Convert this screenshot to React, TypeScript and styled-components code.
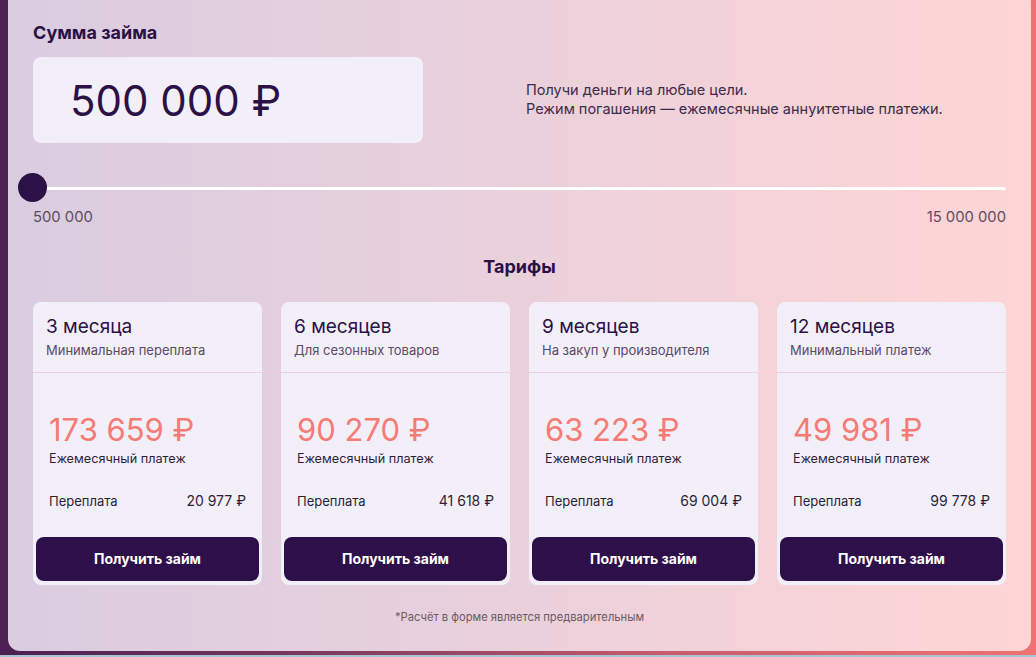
import React from "react";
import styled, { createGlobalStyle } from "styled-components";

const GlobalStyle = createGlobalStyle`
  html, body { margin: 0; padding: 0; overflow: hidden; }
  body { font-family: "Inter", "Noto Sans", sans-serif; background: #9fbccb; }
`;

const Page = styled.div`
  width: 1036px;
  height: 657px;
  display: flex;
  flex-direction: column;
`;

const Backdrop = styled.div`
  height: 655px;
  box-sizing: border-box;
  padding: 0 5px 4px 8px;
  background: linear-gradient(90deg, #4a2051 0%, #7a3a5e 30%, #c85c6e 65%, #f07272 100%);
  display: flex;
  flex-direction: column;
`;

const BottomStrip = styled.div`
  height: 2px;
  background: #a9c4d2;
`;

const Panel = styled.div`
  margin-top: -10px;
  flex: 1;
  border-radius: 12px;
  background: linear-gradient(90deg, #dacce0 0%, #e8d0dc 45%, #ffd5d5 100%);
  box-sizing: border-box;
  padding: 31px 25px 0 25px;
  display: flex;
  flex-direction: column;
`;

const Heading = styled.h2`
  margin: 0;
  font-family: "Inter", sans-serif;
  font-weight: 700;
  font-size: 18px;
  line-height: 24px;
  color: #2b1145;
`;

const AmountRow = styled.div`
  margin-top: 12px;
  display: flex;
  align-items: center;
`;

const AmountBox = styled.div`
  width: 390px;
  height: 86px;
  box-sizing: border-box;
  padding-left: 37px;
  border-radius: 8px;
  background: #f3eff9;
  display: flex;
  align-items: center;
  font-size: 42px;
  font-weight: 400;
  color: #2b1145;
`;

const Note = styled.p`
  margin: 0 0 3px 103px;
  font-size: 14.5px;
  line-height: 19px;
  color: #3b2c4c;
`;

const SliderTrack = styled.div`
  position: relative;
  margin-top: 30px;
  height: 30px;
  display: flex;
  align-items: center;
`;

const TrackLine = styled.div`
  flex: 1;
  height: 3px;
  border-radius: 2px;
  background: #ffffff;
`;

const Thumb = styled.div`
  position: absolute;
  left: -15px;
  top: 0;
  width: 29px;
  height: 29px;
  border-radius: 50%;
  background: #2b1145;
`;

const RangeLabels = styled.div`
  margin-top: 6px;
  display: flex;
  justify-content: space-between;
  font-family: "Inter", sans-serif;
  font-size: 14.8px;
  line-height: 16px;
  color: #5d4c5e;
`;

const SectionTitle = styled.h3`
  margin: 30px 0 0;
  text-align: center;
  font-family: "Inter", sans-serif;
  font-weight: 700;
  font-size: 18px;
  line-height: 24px;
  color: #2b1145;
`;

const Cards = styled.div`
  margin-top: 23px;
  display: grid;
  grid-template-columns: repeat(4, 229px);
  column-gap: 19px;
`;

const Card = styled.div`
  height: 283px;
  box-sizing: border-box;
  border-radius: 8px;
  background: #f3eff9;
  display: flex;
  flex-direction: column;
  padding-bottom: 4px;
`;

const CardHead = styled.div`
  padding: 14px 13px 14px;
  border-bottom: 1px solid #ead0dc;
`;

const CardTitle = styled.div`
  font-size: 19px;
  line-height: 22px;
  color: #2b1145;
`;

const CardSub = styled.div`
  margin-top: 4px;
  font-size: 13px;
  line-height: 16px;
  color: #5a4a66;
`;

const CardBody = styled.div`
  padding: 0 16px;
  display: flex;
  flex-direction: column;
`;

const Price = styled.div`
  margin-top: 38px;
  font-size: 31px;
  line-height: 38px;
  color: #f57b74;
`;

const PriceCaption = styled.div`
  margin-top: 2px;
  font-size: 12.7px;
  line-height: 16px;
  color: #2b1f3a;
`;

const OverpayRow = styled.div`
  margin-top: 26px;
  display: flex;
  justify-content: space-between;
  align-items: baseline;
  font-size: 13px;
  line-height: 16px;
  color: #2b1f3a;
`;

const OverpayValue = styled.span`
  font-size: 14px;
`;

const Button = styled.button`
  margin: auto 3px 0;
  height: 44px;
  padding: 0 0 2px;
  border: none;
  border-radius: 8px;
  background: #2d1049;
  color: #ffffff;
  font-family: "Inter", sans-serif;
  font-weight: 700;
  font-size: 14px;
  cursor: pointer;
`;

const Footnote = styled.div`
  margin-top: 25px;
  text-align: center;
  font-family: "Inter", sans-serif;
  font-size: 11.2px;
  line-height: 14px;
  color: #6a5a66;
`;

const tariffs = [
  { term: "3 месяца", sub: "Минимальная переплата", price: "173 659 ₽", over: "20 977 ₽" },
  { term: "6 месяцев", sub: "Для сезонных товаров", price: "90 270 ₽", over: "41 618 ₽" },
  { term: "9 месяцев", sub: "На закуп у производителя", price: "63 223 ₽", over: "69 004 ₽" },
  { term: "12 месяцев", sub: "Минимальный платеж", price: "49 981 ₽", over: "99 778 ₽" },
];

export default function App() {
  return (
    <Page>
      <GlobalStyle />
      <Backdrop>
        <Panel>
          <Heading>Сумма займа</Heading>
          <AmountRow>
            <AmountBox>500 000 ₽</AmountBox>
            <Note>
              Получи деньги на любые цели.
              <br />
              Режим погашения — ежемесячные аннуитетные платежи.
            </Note>
          </AmountRow>
          <SliderTrack>
            <TrackLine />
            <Thumb />
          </SliderTrack>
          <RangeLabels>
            <span>500 000</span>
            <span>15 000 000</span>
          </RangeLabels>
          <SectionTitle>Тарифы</SectionTitle>
          <Cards>
            {tariffs.map((t) => (
              <Card key={t.term}>
                <CardHead>
                  <CardTitle>{t.term}</CardTitle>
                  <CardSub>{t.sub}</CardSub>
                </CardHead>
                <CardBody>
                  <Price>{t.price}</Price>
                  <PriceCaption>Ежемесячный платеж</PriceCaption>
                  <OverpayRow>
                    <span>Переплата</span>
                    <OverpayValue>{t.over}</OverpayValue>
                  </OverpayRow>
                </CardBody>
                <Button>Получить займ</Button>
              </Card>
            ))}
          </Cards>
          <Footnote>*Расчёт в форме является предварительным</Footnote>
        </Panel>
      </Backdrop>
      <BottomStrip />
    </Page>
  );
}
